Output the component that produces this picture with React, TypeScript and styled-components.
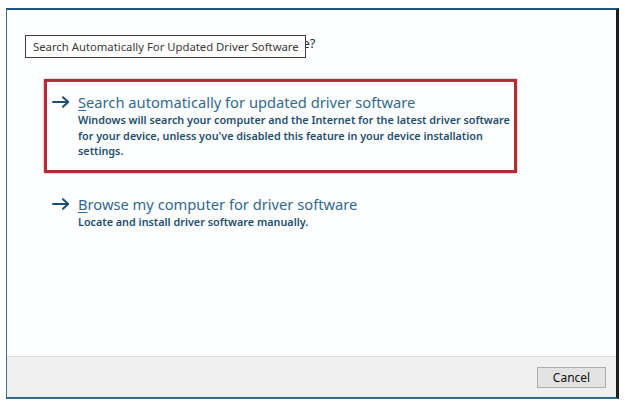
import React from 'react'
import styled, { createGlobalStyle } from 'styled-components'

const GlobalStyle = createGlobalStyle`
  html, body {
    margin: 0;
    padding: 0;
    background: #ffffff;
  }
  body {
    font-family: 'Noto Sans', 'Open Sans', sans-serif;
    padding: 8px 11px 0 6px;
  }
`

type OptionProps = {
  accessKey: string
  rest: string
  description: string
  highlighted?: boolean
}

const Option = (props: OptionProps) => {
  return (
    <Div_Option $highlighted={props.highlighted}>
      <Svg_Arrow viewBox="0 0 18 12" width={18} height={12}>
        <path d="M1 6 H16 M11 1.2 L16.2 6 L11 10.8" />
      </Svg_Arrow>
      <Div_OptionText>
        <P_OptionTitle>
          <U_Key>{props.accessKey}</U_Key>
          {props.rest}
        </P_OptionTitle>
        <P_OptionDesc>{props.description}</P_OptionDesc>
      </Div_OptionText>
    </Div_Option>
  )
}

export default function App() {
  return (
    <>
      <GlobalStyle />
      <Div_Window>
        <Div_Content>
          <H_Question>How do you want to search for driver software?</H_Question>
          <Div_Tooltip>Search Automatically For Updated Driver Software</Div_Tooltip>
          <Div_Options>
            <Option
              highlighted
              accessKey="S"
              rest="earch automatically for updated driver software"
              description="Windows will search your computer and the Internet for the latest driver software for your device, unless you've disabled this feature in your device installation settings."
            />
            <Option
              accessKey="B"
              rest="rowse my computer for driver software"
              description="Locate and install driver software manually."
            />
          </Div_Options>
        </Div_Content>
        <Div_Footer>
          <Button_Cancel>Cancel</Button_Cancel>
        </Div_Footer>
      </Div_Window>
    </>
  )
}

const Div_Window = styled.div`
  width: 613px;
  height: 391px;
  box-sizing: border-box;
  border-top: 2px solid #1d5676;
  border-left: 1px solid #3f6d82;
  border-right: 3px solid #1b1d1f;
  border-bottom: 2px solid #2f6a84;
  display: flex;
  flex-direction: column;
  background: #ffffff;
`

const Div_Content = styled.div`
  position: relative;
  flex: 1;
  padding: 23px 0 0 37px;
  background: #fdfeff;
`

const H_Question = styled.h1`
  margin: 0 0 26px -17px;
  font-size: 13px;
  font-weight: 400;
  line-height: 20px;
  color: #2a2f3a;
  white-space: nowrap;
`

const Div_Tooltip = styled.div`
  position: absolute;
  left: 18px;
  top: 25px;
  width: 281px;
  height: 23px;
  box-sizing: border-box;
  border: 1px solid #3c3c3c;
  background: #ffffff;
  color: #3a3a3a;
  font-size: 11.3px;
  line-height: 21px;
  padding-left: 7px;
  white-space: nowrap;
`

const Div_Options = styled.div`
  display: flex;
  flex-direction: column;
  gap: 8px;
  width: 473px;
`

const Div_Option = styled.div<{ $highlighted?: boolean }>`
  display: grid;
  grid-template-columns: 26px minmax(0, 1fr);
  align-items: start;
  padding: 10px 0 11px 5px;
  border: 3px solid ${(p) => (p.$highlighted ? '#b22c38' : 'transparent')};
  box-shadow: ${(p) => (p.$highlighted ? '0 0 2px rgba(120, 20, 30, 0.5)' : 'none')};
`

const Svg_Arrow = styled.svg`
  margin-top: 4px;
  fill: none;
  stroke: #1f4d6c;
  stroke-width: 2;
  stroke-linecap: round;
  stroke-linejoin: round;
`

const Div_OptionText = styled.div`
  display: flex;
  flex-direction: column;
`

const P_OptionTitle = styled.p`
  margin: 0;
  font-size: 14.7px;
  line-height: 20px;
  color: #336a8c;
  white-space: nowrap;
`

const U_Key = styled.span`
  text-decoration: underline;
  text-underline-offset: 2px;
`

const P_OptionDesc = styled.p`
  margin: 0;
  font-size: 10.8px;
  font-weight: 600;
  line-height: 15.5px;
  color: #1f4f6e;
  max-width: 434px;
`

const Div_Footer = styled.div`
  height: 40px;
  flex-shrink: 0;
  border-top: 1px solid #dcdcdc;
  background: #f0f0f0;
  display: flex;
  justify-content: flex-end;
  align-items: center;
  padding-right: 10px;
`

const Button_Cancel = styled.button`
  width: 69px;
  height: 21px;
  border: 1px solid #adadad;
  background: #e3e3e3;
  font-family: 'Noto Sans', 'Open Sans', sans-serif;
  font-size: 12px;
  color: #111111;
  padding: 0;
`
